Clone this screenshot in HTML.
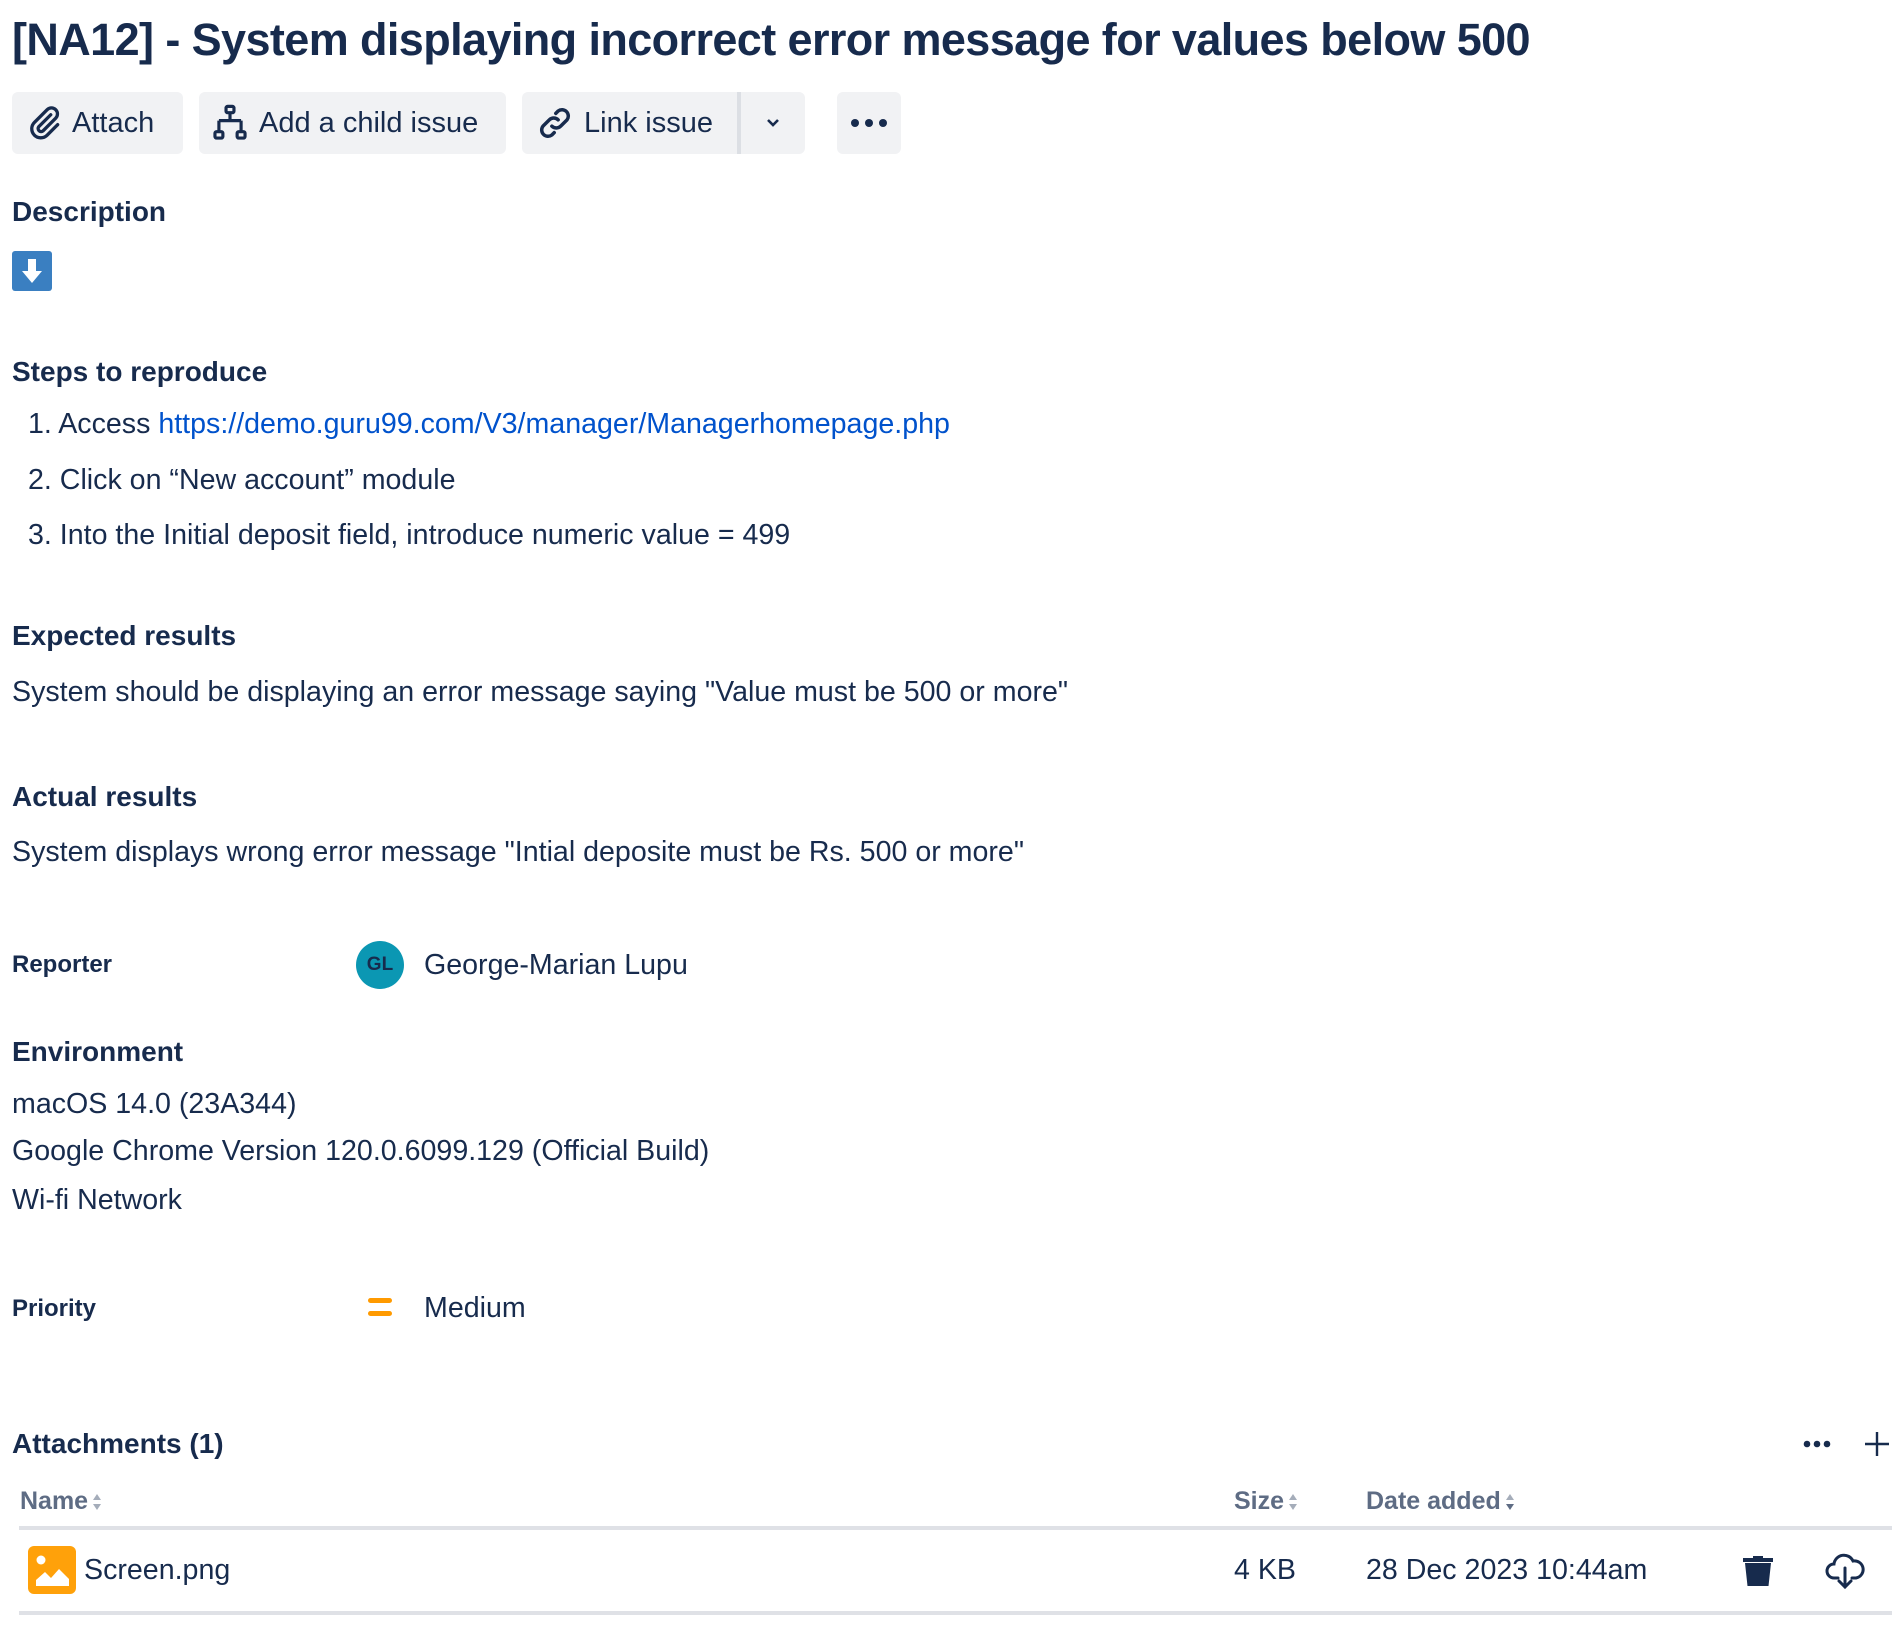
<!DOCTYPE html>
<html><head><meta charset="utf-8"><style>
*{margin:0;padding:0;box-sizing:border-box}
body{width:1904px;height:1626px;background:#fff;font-family:"Liberation Sans",sans-serif;color:#172B4D;position:relative;overflow:hidden}
.a{position:absolute;white-space:nowrap}
.t{font-size:28.6px;line-height:34px}
.h{font-size:28px;font-weight:bold;line-height:34px}
.btn{position:absolute;top:92px;height:62px;background:#F1F2F4;border-radius:6px;font-size:29px;line-height:62px;display:flex;align-items:center}
.btn svg{flex:none}
.srt{display:inline-block;vertical-align:middle;margin-left:4px}
</style></head><body>
<div class="a" style="left:12px;top:12px;font-size:45px;font-weight:bold;line-height:56px;letter-spacing:-0.6px">[NA12] - System displaying incorrect error message for values below 500</div>

<div class="btn" style="left:12px;width:171px"><svg style="margin-left:14px" width="36" height="40" viewBox="0 0 24 24"><path d="M16.5 6.5l-8 8a2 2 0 0 0 2.8 2.8l8.5-8.5a4 4 0 0 0-5.7-5.7l-8.5 8.5a6 6 0 0 0 8.5 8.5l7-7" fill="none" stroke="#172B4D" stroke-width="2.2" stroke-linecap="round"/></svg><span style="margin-left:10px">Attach</span></div>
<div class="btn" style="left:199px;width:307px"><svg style="margin-left:12px" width="38" height="40" viewBox="0 0 24 24" fill="none" stroke="#172B4D" stroke-width="2"><rect x="9.5" y="1.5" width="5" height="4" rx="1"/><path d="M12 5.5v5M5 10.5h14M5 10.5v7M19 10.5v7"/><rect x="2.5" y="17.5" width="5" height="4" rx="1"/><rect x="16.5" y="17.5" width="5" height="4" rx="1"/></svg><span style="margin-left:10px">Add a child issue</span></div>
<div class="btn" style="left:522px;width:215px;border-radius:6px 0 0 6px"><svg style="margin-left:14px" width="38" height="38" viewBox="0 0 24 24" fill="none" stroke="#172B4D" stroke-width="2.2" stroke-linecap="round"><path d="M10 14a4 4 0 0 0 5.6 0l4-4a4 4 0 0 0-5.6-5.6l-1.5 1.5"/><path d="M14 10a4 4 0 0 0-5.6 0l-4 4a4 4 0 0 0 5.6 5.6l1.5-1.5"/></svg><span style="margin-left:10px">Link issue</span></div>
<div class="a" style="left:737px;top:92px;width:4px;height:62px;background:#DCDFE4"></div>
<div class="btn" style="left:741px;width:64px;border-radius:0 6px 6px 0;justify-content:center"><svg width="18" height="12" viewBox="0 0 18 12"><path d="M4 3l5 5 5-5" fill="none" stroke="#172B4D" stroke-width="2.6"/></svg></div>
<div class="btn" style="left:837px;width:64px;justify-content:center"><svg width="38" height="10" viewBox="0 0 38 10"><circle cx="5" cy="5" r="4" fill="#172B4D"/><circle cx="19" cy="5" r="4" fill="#172B4D"/><circle cx="33" cy="5" r="4" fill="#172B4D"/></svg></div>

<div class="a h" style="left:12px;top:195px">Description</div>
<div class="a" style="left:12px;top:251px;width:40px;height:40px;background:#3A7FC1;border-radius:3px"><svg width="40" height="40" viewBox="0 0 40 40"><path d="M16 8h8v12h6l-10 12-10-12h6z" fill="#fff"/></svg></div>

<div class="a h" style="left:12px;top:355px">Steps to reproduce</div>
<div class="a t" style="left:28px;top:407px">1. Access <span style="color:#0052CC">https://demo.guru99.com/V3/manager/Managerhomepage.php</span></div>
<div class="a t" style="left:28px;top:463px">2. Click on “New account” module</div>
<div class="a t" style="left:28px;top:518px">3. Into the Initial deposit field, introduce numeric value = 499</div>

<div class="a h" style="left:12px;top:619px">Expected results</div>
<div class="a t" style="left:12px;top:675px">System should be displaying an error message saying "Value must be 500 or more"</div>
<div class="a h" style="left:12px;top:780px">Actual results</div>
<div class="a t" style="left:12px;top:835px">System displays wrong error message "Intial deposite must be Rs. 500 or more"</div>

<div class="a" style="left:12px;top:950px;font-size:24px;font-weight:bold;line-height:30px">Reporter</div>
<div class="a" style="left:356px;top:941px;width:48px;height:48px;border-radius:50%;background:#0B97B3;color:#172B4D;font-size:19px;font-weight:bold;line-height:48px;text-align:center">GL</div>
<div class="a t" style="left:424px;top:948px">George-Marian Lupu</div>

<div class="a h" style="left:12px;top:1035px">Environment</div>
<div class="a t" style="left:12px;top:1087px">macOS 14.0 (23A344)</div>
<div class="a t" style="left:12px;top:1134px">Google Chrome Version 120.0.6099.129 (Official Build)</div>
<div class="a t" style="left:12px;top:1183px">Wi-fi Network</div>

<div class="a" style="left:12px;top:1294px;font-size:24px;font-weight:bold;line-height:30px">Priority</div>
<div class="a" style="left:368px;top:1298px;width:24px;height:5px;border-radius:3px;background:#FF9A00"></div>
<div class="a" style="left:368px;top:1311px;width:24px;height:5px;border-radius:3px;background:#FF9A00"></div>
<div class="a t" style="left:424px;top:1291px">Medium</div>

<div class="a h" style="left:12px;top:1427px">Attachments (1)</div>
<svg class="a" style="left:1803px;top:1440px" width="28" height="8"><circle cx="4" cy="4" r="3.3" fill="#172B4D"/><circle cx="14" cy="4" r="3.3" fill="#172B4D"/><circle cx="24" cy="4" r="3.3" fill="#172B4D"/></svg>
<svg class="a" style="left:1864px;top:1431px" width="26" height="26"><path d="M13 1v24M1 13h24" stroke="#172B4D" stroke-width="2.4"/></svg>

<div class="a" style="left:20px;top:1486px;font-size:25px;font-weight:bold;line-height:30px;color:#5E6C84">Name<svg class="srt" width="10" height="18" viewBox="0 0 10 18"><path d="M5 1l4 6H1zM5 17l4-6H1z" fill="#A5ADBA"/></svg></div>
<div class="a" style="left:1234px;top:1486px;font-size:25px;font-weight:bold;line-height:30px;color:#5E6C84">Size<svg class="srt" width="10" height="18" viewBox="0 0 10 18"><path d="M5 1l4 6H1zM5 17l4-6H1z" fill="#A5ADBA"/></svg></div>
<div class="a" style="left:1366px;top:1486px;font-size:25px;font-weight:bold;line-height:30px;color:#5E6C84">Date added<svg class="srt" width="10" height="18" viewBox="0 0 10 18"><path d="M5 1l4 6H1z" fill="#A5ADBA"/><path d="M5 17l4-6H1z" fill="#5E6C84"/></svg></div>
<div class="a" style="left:19px;top:1526px;width:1873px;height:4px;background:#DFE1E6"></div>

<div class="a" style="left:28px;top:1546px;width:48px;height:48px;border-radius:6px;background:#FFA10A"><svg width="48" height="48" viewBox="0 0 48 48"><circle cx="13" cy="14" r="4.5" fill="#fff"/><path d="M8 40V34l9-8 6 6 8-9 10 10v7z" fill="#fff"/></svg></div>
<div class="a t" style="left:84px;top:1553px">Screen.png</div>
<div class="a t" style="left:1234px;top:1553px">4 KB</div>
<div class="a t" style="left:1366px;top:1553px">28 Dec 2023 10:44am</div>
<svg class="a" style="left:1742px;top:1553px" width="32" height="34" viewBox="0 0 32 34"><path d="M11 3h10v2H11z M1 5h30v4H1z M3 10h26l-2.5 23h-21z" fill="#172B4D"/></svg>
<svg class="a" style="left:1825px;top:1552px" width="40" height="38" viewBox="0 0 40 38" fill="none" stroke="#172B4D" stroke-width="3" stroke-linecap="round"><path d="M13 26H9a7 7 0 0 1 0-14 10 10 0 0 1 19-3 8 8 0 0 1 3 17h-4"/><path d="M20 16v19M14 29l6 6 6-6"/></svg>
<div class="a" style="left:19px;top:1611px;width:1873px;height:4px;background:#DFE1E6"></div>
</body></html>
